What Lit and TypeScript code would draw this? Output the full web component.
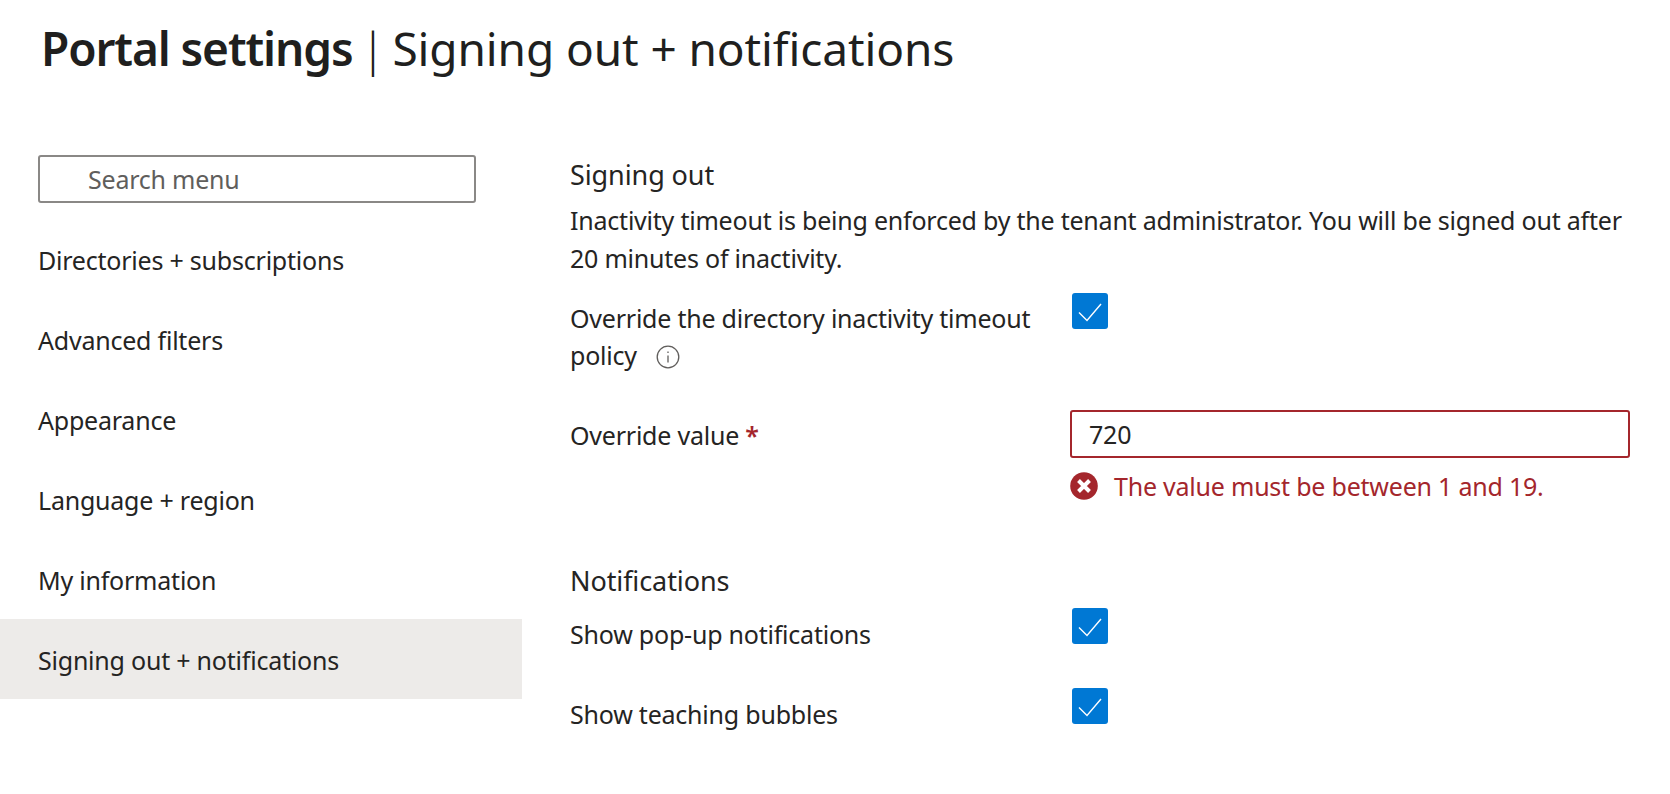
import { LitElement, css, html } from "lit";
import { customElement } from "lit/decorators.js";

const MENU = [
  "Directories + subscriptions",
  "Advanced filters",
  "Appearance",
  "Language + region",
  "My information",
  "Signing out + notifications",
];

const check = html`<span class="check">
  <svg width="36" height="36" viewBox="0 0 36 36" fill="none">
    <path d="M7 19.5 15 27.5 29 11" stroke="#fff" stroke-width="1.4" />
  </svg>
</span>`;

@customElement("app-root")
export class AppRoot extends LitElement {
  static override styles = css`
    :host {
      display: block;
      width: 1670px;
      height: 794px;
      overflow: hidden;
      background: #fff;
      color: #252423;
      font-family: "Noto Sans", "Open Sans", sans-serif;
      font-size: 25px;
      letter-spacing: -0.22px;
    }
    h1 {
      margin: 0;
      padding: 15px 0 0 41px;
      height: 140px;
      box-sizing: border-box;
      font-size: 46px;
      line-height: 66px;
      font-weight: 400;
      letter-spacing: -0.1px;
      color: #201f1e;
    }
    h1 b {
      font-weight: 600;
      letter-spacing: -1.1px;
    }
    h1 i {
      font-style: normal;
      font-weight: 300;
      margin: 0 7px 0 8px;
    }
    .page {
      display: flex;
    }
    .side {
      width: 522px;
      flex: none;
      padding-top: 15px;
    }
    .search {
      width: 438px;
      height: 48px;
      margin-left: 38px;
      box-sizing: border-box;
      border: 2px solid #8a8886;
      border-radius: 3px;
      padding-left: 48px;
      line-height: 44px;
      color: #605e5c;
    }
    .menu {
      margin-top: 16px;
    }
    .item {
      height: 80px;
      line-height: 83px;
      padding-left: 38px;
    }
    .item.active {
      background: #edebe9;
    }
    .main {
      width: 1100px;
      margin-left: 48px;
      padding-top: 17px;
    }
    h2 {
      margin: 0;
      font-size: 27px;
      line-height: 36px;
      font-weight: 400;
      letter-spacing: -0.1px;
    }
    p {
      margin: 8px 0 0;
      line-height: 38px;
    }
    .row {
      display: flex;
    }
    .label {
      width: 502px;
      flex: none;
      line-height: 37px;
      padding-top: 8px;
    }
    .policy {
      margin-top: 16px;
    }
    .policy .label {
      padding-top: 7px;
    }
    .value {
      margin-top: 36px;
    }
    .value .label {
      padding-top: 7px;
    }
    .popup {
      margin-top: 9px;
    }
    .bubbles {
      margin-top: 35px;
    }
    .check {
      display: flex;
      width: 36px;
      height: 36px;
      border-radius: 3px;
      background: #0078d4;
    }
    .info {
      display: inline-block;
      vertical-align: -4px;
      margin-left: 19px;
    }
    .req {
      color: #a4262c;
      font-weight: 600;
    }
    .field {
      margin-left: -2px;
    }
    .input {
      width: 560px;
      height: 48px;
      box-sizing: border-box;
      border: 2px solid #a4262c;
      border-radius: 3px;
      padding-left: 17px;
      line-height: 44px;
    }
    .error {
      display: flex;
      align-items: center;
      gap: 16px;
      margin-top: 10px;
      color: #a4262c;
      line-height: 36px;
    }
    .notifications {
      margin-top: 59px;
    }
  `;

  override render() {
    return html`
      <h1><b>Portal settings</b><i>|</i>Signing out + notifications</h1>
      <div class="page">
        <div class="side">
          <div class="search">Search menu</div>
          <div class="menu">
            ${MENU.map(
              (m, i) =>
                html`<div class="item ${i === MENU.length - 1 ? "active" : ""}">${m}</div>`
            )}
          </div>
        </div>
        <div class="main">
          <h2>Signing out</h2>
          <p>
            Inactivity timeout is being enforced by the tenant administrator. You will be signed
            out after<br />20 minutes of inactivity.
          </p>
          <div class="row policy">
            <div class="label">
              Override the directory inactivity timeout<br />policy<svg
                class="info"
                width="24"
                height="24"
                viewBox="0 0 24 24"
                fill="none"
                stroke="#605e5c"
                stroke-width="1.3"
              >
                <circle cx="12" cy="12" r="10.8" />
                <path d="M12 10.5v7M12 6.5v1.6" />
              </svg>
            </div>
            ${check}
          </div>
          <div class="row value">
            <div class="label">Override value <span class="req">*</span></div>
            <div class="field">
              <div class="input">720</div>
              <div class="error">
                <svg width="28" height="28" viewBox="0 0 28 28">
                  <circle cx="14" cy="14" r="13.8" fill="#a4262c" />
                  <path d="M8.5 8.5l11 11M19.5 8.5l-11 11" stroke="#fff" stroke-width="4" />
                </svg>
                The value must be between 1 and 19.
              </div>
            </div>
          </div>
          <h2 class="notifications">Notifications</h2>
          <div class="row popup">
            <div class="label">Show pop-up notifications</div>
            ${check}
          </div>
          <div class="row bubbles">
            <div class="label">Show teaching bubbles</div>
            ${check}
          </div>
        </div>
      </div>
    `;
  }
}
